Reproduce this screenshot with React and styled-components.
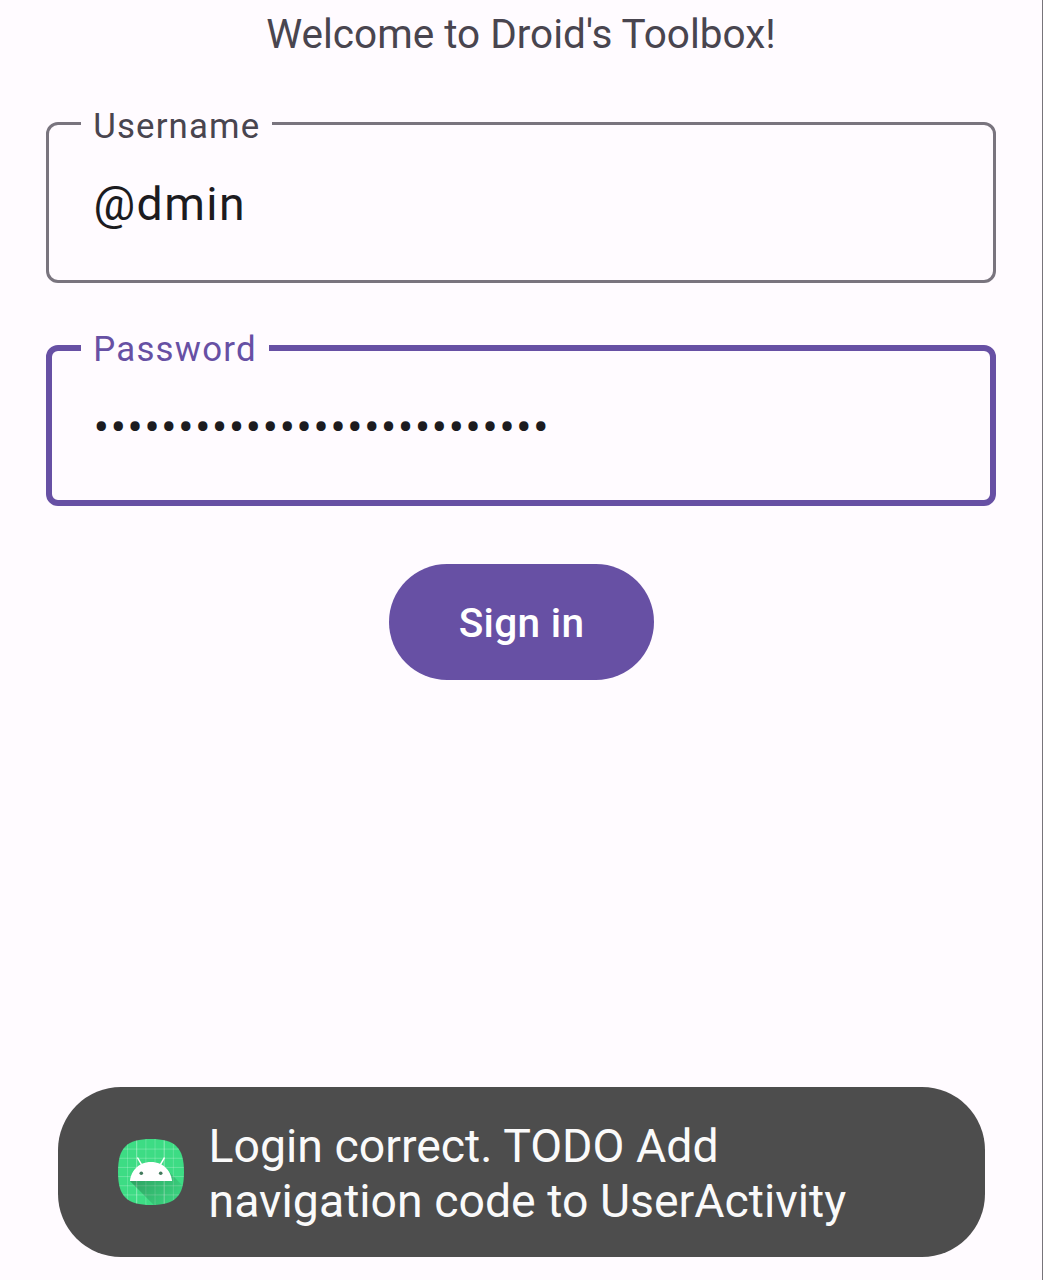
import React from "react";
import styled, { createGlobalStyle } from "styled-components";

const GlobalStyle = createGlobalStyle`
  *, *::before, *::after { box-sizing: border-box; }
  body { margin: 0; background: #fffbff; }
`;

const Screen = styled.main`
  display: flex;
  flex-direction: column;
  width: 1043px;
  height: 1280px;
  padding: 6px 46px 23px;
  border-right: 1px solid #77747a;
  background: #fffbff;
  color: #1c1b1f;
  font-family: Roboto, "Liberation Sans", sans-serif;
  overflow: hidden;
`;

const Welcome = styled.h1`
  margin: 0;
  font-size: 40.5px;
  font-weight: 400;
  line-height: 56px;
  text-align: center;
  color: #49454f;
  white-space: nowrap;
`;

const Form = styled.form`
  display: flex;
  flex-direction: column;
  align-items: center;
  margin-top: 41px;
`;

const Field = styled.fieldset`
  width: 950px;
  height: ${(p) => (p.$focused ? 179 : 180)}px;
  margin: 0 0 ${(p) => (p.$focused ? 58 : 44)}px;
  padding: 0 ${(p) => (p.$focused ? 29 : 32)}px;
  border: ${(p) => (p.$focused ? 6 : 3)}px solid
    ${(p) => (p.$focused ? "#6750a4" : "#79747e")};
  border-radius: 12px;
`;

const Label = styled.legend`
  width: ${(p) => p.$width}px;
  height: 41px;
  padding: ${(p) => (p.$focused ? 4 : 5)}px 0 0 12.2px;
  font-size: 34.8px;
  line-height: 36px;
  letter-spacing: ${(p) => (p.$focused ? 1.25 : 1.16)}px;
  white-space: nowrap;
  color: ${(p) => (p.$focused ? "#6750a4" : "#49454f")};
`;

const Value = styled.div`
  padding: ${(p) => p.$top}px 12px 0 12.5px;
  font-size: 46.4px;
  line-height: 56px;
  letter-spacing: ${(p) => p.$spacing}px;
  white-space: nowrap;
`;

const SignIn = styled.button`
  width: 265px;
  height: 116px;
  padding: 1px 0 0 1px;
  border: 0;
  border-radius: 58px;
  background: #6750a4;
  color: #fff;
  font-family: inherit;
  font-size: 40.6px;
  font-weight: 500;
  letter-spacing: 0.29px;
`;

const Toast = styled.div`
  display: flex;
  align-items: center;
  gap: 24.6px;
  width: 927px;
  height: 170px;
  margin: auto 0 0 12px;
  padding: 0 60px;
  border-radius: 63px;
  background: #4d4d4d;
  color: #fafafa;
`;

const Message = styled.p`
  margin: 0;
  padding-top: 4px;
  font-size: 46.4px;
  line-height: 55px;
  white-space: nowrap;
`;

const IconSvg = styled.svg`
  flex: none;
  width: 66px;
  height: 66px;
`;

const gridStops = [29, 39, 49, 59, 69, 79];

function AppIcon() {
  return (
    <IconSvg viewBox="18 18 72 72" aria-hidden="true">
      <defs>
        <clipPath id="squircle">
          <path d="M54 18C80.5 18 90 27.5 90 54S80.5 90 54 90 18 80.5 18 54 27.5 18 54 18Z" />
        </clipPath>
        <linearGradient
          id="shade"
          gradientUnits="userSpaceOnUse"
          x1="42.95"
          y1="49.6"
          x2="85.85"
          y2="92.5"
        >
          <stop offset="0" stopColor="#000" stopOpacity="0.27" />
          <stop offset="1" stopColor="#000" stopOpacity="0" />
        </linearGradient>
      </defs>
      <g clipPath="url(#squircle)">
        <path fill="#3ddc84" d="M18 18h72v72H18z" />
        {gridStops.map((n) => (
          <g key={n} stroke="#fff" strokeWidth="0.9">
            <path d={`M${n - 0.6} 18v72`} opacity={n === 39 || n === 69 ? 0.5 : 0.22} />
            <path d={`M18 ${n}h72`} opacity="0.27" />
          </g>
        ))}
        <path
          fill="url(#shade)"
          d="M31 63.928s6.4-11 12.1-13.1c7.2-2.6 26-1.4 26-1.4l38.1 38.1L107 108.928l-32-1z"
        />
        <path
          fill="#fff"
          d="M65.3 45.828l3.8-6.6c.2-.4.1-.9-.3-1.1-.4-.2-.9-.1-1.1.3l-3.9 6.7c-6.3-2.8-13.4-2.8-19.7 0l-3.9-6.7c-.2-.4-.7-.5-1.1-.3-.3.2-.4.7-.2 1.1l3.8 6.6C36.2 49.428 31.7 56.028 31 63.928h46c-.7-7.9-5.2-14.5-11.7-18.1z"
        />
        <circle cx="43.4" cy="55.4" r="1.95" fill="#427a5c" />
        <circle cx="64.6" cy="55.4" r="1.95" fill="#427a5c" />
      </g>
    </IconSvg>
  );
}

export default function App() {
  return (
    <>
      <GlobalStyle />
      <Screen>
        <Welcome>Welcome to Droid's Toolbox!</Welcome>
        <Form onSubmit={(e) => e.preventDefault()}>
          <Field>
            <Label $width={191}>Username</Label>
            <Value $top={32} $spacing={1.45}>@dmin</Value>
          </Field>
          <Field $focused>
            <Label $focused $width={188}>Password</Label>
            <Value $top={31} $spacing={1.25}>{"•".repeat(27)}</Value>
          </Field>
          <SignIn type="submit">Sign in</SignIn>
        </Form>
        <Toast role="status">
          <AppIcon />
          <Message>
            Login correct. TODO Add
            <br />
            navigation code to UserActivity
          </Message>
        </Toast>
      </Screen>
    </>
  );
}
